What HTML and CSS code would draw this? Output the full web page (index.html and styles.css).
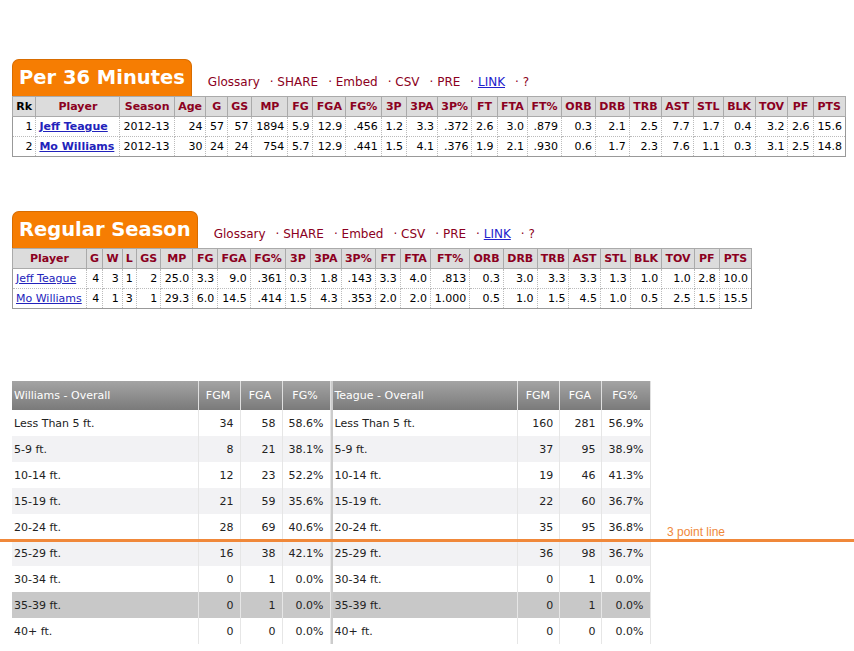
FILE: index.html
```html
<!DOCTYPE html>
<html>
<head>
<meta charset="utf-8">
<link rel="stylesheet" href="styles.css">
</head>
<body>
<div class="page">
  <section class="block first">
    <div class="titlebar">
      <h2 class="tab">Per 36 Minutes</h2>
      <div class="tools">
        <span class="tool">Glossary</span>
        <span class="tool">· SHARE</span>
        <span class="tool">· Embed</span>
        <span class="tool">· CSV</span>
        <span class="tool">· PRE</span>
        <span class="tool">· <a href="#" class="lnk">LINK</a></span>
        <span class="tool">· ?</span>
      </div>
    </div>
    <table class="stats t1">
      <thead>
        <tr><th class="rk">Rk</th><th>Player</th><th>Season</th><th>Age</th><th>G</th><th>GS</th><th>MP</th><th>FG</th><th>FGA</th><th>FG%</th><th>3P</th><th>3PA</th><th>3P%</th><th>FT</th><th>FTA</th><th>FT%</th><th>ORB</th><th>DRB</th><th>TRB</th><th>AST</th><th>STL</th><th>BLK</th><th>TOV</th><th>PF</th><th>PTS</th></tr>
      </thead>
      <tbody>
        <tr><td>1</td><td class="l"><a href="#" class="pl b">Jeff Teague</a></td><td class="l">2012-13</td><td>24</td><td>57</td><td>57</td><td>1894</td><td>5.9</td><td>12.9</td><td>.456</td><td>1.2</td><td>3.3</td><td>.372</td><td>2.6</td><td>3.0</td><td>.879</td><td>0.3</td><td>2.1</td><td>2.5</td><td>7.7</td><td>1.7</td><td>0.4</td><td>3.2</td><td>2.6</td><td>15.6</td></tr>
        <tr><td>2</td><td class="l"><a href="#" class="pl b">Mo Williams</a></td><td class="l">2012-13</td><td>30</td><td>24</td><td>24</td><td>754</td><td>5.7</td><td>12.9</td><td>.441</td><td>1.5</td><td>4.1</td><td>.376</td><td>1.9</td><td>2.1</td><td>.930</td><td>0.6</td><td>1.7</td><td>2.3</td><td>7.6</td><td>1.1</td><td>0.3</td><td>3.1</td><td>2.5</td><td>14.8</td></tr>
      </tbody>
    </table>
  </section>

  <section class="block second">
    <div class="titlebar">
      <h2 class="tab">Regular Season</h2>
      <div class="tools">
        <span class="tool">Glossary</span>
        <span class="tool">· SHARE</span>
        <span class="tool">· Embed</span>
        <span class="tool">· CSV</span>
        <span class="tool">· PRE</span>
        <span class="tool">· <a href="#" class="lnk">LINK</a></span>
        <span class="tool">· ?</span>
      </div>
    </div>
    <table class="stats t2">
      <thead>
        <tr><th>Player</th><th>G</th><th>W</th><th>L</th><th>GS</th><th>MP</th><th>FG</th><th>FGA</th><th>FG%</th><th>3P</th><th>3PA</th><th>3P%</th><th>FT</th><th>FTA</th><th>FT%</th><th>ORB</th><th>DRB</th><th>TRB</th><th>AST</th><th>STL</th><th>BLK</th><th>TOV</th><th>PF</th><th>PTS</th></tr>
      </thead>
      <tbody>
        <tr><td class="l"><a href="#" class="pl">Jeff Teague</a></td><td>4</td><td>3</td><td class="l">1</td><td>2</td><td>25.0</td><td>3.3</td><td>9.0</td><td>.361</td><td>0.3</td><td>1.8</td><td>.143</td><td>3.3</td><td>4.0</td><td>.813</td><td>0.3</td><td>3.0</td><td>3.3</td><td>3.3</td><td>1.3</td><td>1.0</td><td>1.0</td><td>2.8</td><td>10.0</td></tr>
        <tr><td class="l"><a href="#" class="pl">Mo Williams</a></td><td>4</td><td>1</td><td class="l">3</td><td>1</td><td>29.3</td><td>6.0</td><td>14.5</td><td>.414</td><td>1.5</td><td>4.3</td><td>.353</td><td>2.0</td><td>2.0</td><td>1.000</td><td>0.5</td><td>1.0</td><td>1.5</td><td>4.5</td><td>1.0</td><td>0.5</td><td>2.5</td><td>1.5</td><td>15.5</td></tr>
      </tbody>
    </table>
  </section>

  <section class="shots">
    <table class="shot left">
      <colgroup><col class="c-nm"><col class="c-m"><col class="c-a"><col class="c-p"></colgroup>
      <thead><tr><th class="nm">Williams - Overall</th><th>FGM</th><th>FGA</th><th>FG%</th></tr></thead>
      <tbody>
        <tr><td class="nm">Less Than 5 ft.</td><td>34</td><td>58</td><td>58.6%</td></tr>
        <tr class="alt"><td class="nm">5-9 ft.</td><td>8</td><td>21</td><td>38.1%</td></tr>
        <tr><td class="nm">10-14 ft.</td><td>12</td><td>23</td><td>52.2%</td></tr>
        <tr class="alt"><td class="nm">15-19 ft.</td><td>21</td><td>59</td><td>35.6%</td></tr>
        <tr><td class="nm">20-24 ft.</td><td>28</td><td>69</td><td>40.6%</td></tr>
        <tr class="alt"><td class="nm">25-29 ft.</td><td>16</td><td>38</td><td>42.1%</td></tr>
        <tr><td class="nm">30-34 ft.</td><td>0</td><td>1</td><td>0.0%</td></tr>
        <tr class="hl"><td class="nm">35-39 ft.</td><td>0</td><td>1</td><td>0.0%</td></tr>
        <tr><td class="nm">40+ ft.</td><td>0</td><td>0</td><td>0.0%</td></tr>
      </tbody>
    </table>
    <table class="shot right">
      <colgroup><col class="c-nm"><col class="c-m"><col class="c-a"><col class="c-p"></colgroup>
      <thead><tr><th class="nm">Teague - Overall</th><th>FGM</th><th>FGA</th><th>FG%</th></tr></thead>
      <tbody>
        <tr><td class="nm">Less Than 5 ft.</td><td>160</td><td>281</td><td>56.9%</td></tr>
        <tr class="alt"><td class="nm">5-9 ft.</td><td>37</td><td>95</td><td>38.9%</td></tr>
        <tr><td class="nm">10-14 ft.</td><td>19</td><td>46</td><td>41.3%</td></tr>
        <tr class="alt"><td class="nm">15-19 ft.</td><td>22</td><td>60</td><td>36.7%</td></tr>
        <tr><td class="nm">20-24 ft.</td><td>35</td><td>95</td><td>36.8%</td></tr>
        <tr class="alt"><td class="nm">25-29 ft.</td><td>36</td><td>98</td><td>36.7%</td></tr>
        <tr><td class="nm">30-34 ft.</td><td>0</td><td>1</td><td>0.0%</td></tr>
        <tr class="hl"><td class="nm">35-39 ft.</td><td>0</td><td>1</td><td>0.0%</td></tr>
        <tr><td class="nm">40+ ft.</td><td>0</td><td>0</td><td>0.0%</td></tr>
      </tbody>
    </table>
    <div class="threeline"><span class="threelabel">3 point line</span></div>
  </section>
</div>
</body>
</html>
```

FILE: styles.css
```css
html, body {
  margin: 0;
  padding: 0;
  background: #fff;
}
body {
  font-family: "DejaVu Sans", Verdana, sans-serif;
  color: #000;
}
.page {
  padding: 59px 0 0 12px;
}
.block.second {
  margin-top: 54px;
}
.titlebar {
  display: flex;
  align-items: flex-end;
}
.tab {
  margin: 0;
  height: 37px;
  box-sizing: border-box;
  padding: 5px 6px 0 6px;
  background: #f67d02;
  border: 1px solid #d86c00;
  border-bottom: none;
  border-radius: 7px 7px 0 0;
  color: #fff;
  font-size: 19.5px;
  font-weight: bold;
  line-height: 26px;
  white-space: nowrap;
}
.tools {
  display: flex;
  gap: 10px;
  margin-left: 16px;
  padding-bottom: 7px;
  font-size: 12px;
  color: #8b0021;
  white-space: nowrap;
}
.lnk {
  color: #2222cc;
}
.stats {
  border-collapse: collapse;
  border: 1px solid #999;
  font-size: 11px;
}
.stats.t1 {
  width: 834px;
}
.stats.t2 {
  width: 740px;
}
.stats th {
  background: #dcdcdc;
  color: #8b0021;
  font-weight: bold;
  border: 1px solid #aaa;
  padding: 0 3px;
  height: 19px;
  text-align: center;
  white-space: nowrap;
}
.stats th.rk {
  color: #000;
}
.stats td {
  border: 1px dotted #bbb;
  padding: 0 3px;
  height: 19px;
  text-align: right;
  white-space: nowrap;
  color: #000;
}
.stats td.l {
  text-align: left;
}
.pl {
  color: #2222bb;
}
.pl.b {
  font-weight: bold;
}
.shots {
  position: relative;
  display: flex;
  margin-top: 72px;
  padding-bottom: 8px;
}
.shot {
  border-collapse: collapse;
  table-layout: fixed;
  font-size: 11px;
  color: #222;
}
.shot.left {
  width: 318px;
}
.shot.right {
  width: 320px;
  border-left: 2px solid #ccc;
}
.c-nm { width: 186px; }
.c-m { width: 42px; }
.c-a { width: 42px; }
.c-p { width: 48px; }
.shot th {
  height: 29px;
  padding: 0 4px 0 2px;
  background: linear-gradient(#a4a4a4, #7a7a7a);
  color: #fff;
  font-weight: normal;
  text-align: center;
  border-right: 1px solid #e0e0e0;
}
.shot th.nm {
  text-align: left;
}
.shot td {
  height: 26px;
  padding: 0 6px 0 2px;
  text-align: right;
  border-right: 1px solid #e6e6e6;
  white-space: nowrap;
}
.shot td.nm {
  text-align: left;
}
.shot tr.alt td {
  background: #f2f2f4;
}
.shot tr.hl td {
  background: #c8c8c8;
}
.threeline {
  position: absolute;
  left: -12px;
  width: 854px;
  top: 158px;
  height: 3px;
  background: #f0883a;
}
.threelabel {
  position: absolute;
  left: 667px;
  bottom: 3px;
  font-family: "Liberation Sans", Arial, sans-serif;
  font-size: 12px;
  color: #f0883a;
  white-space: nowrap;
}
```
